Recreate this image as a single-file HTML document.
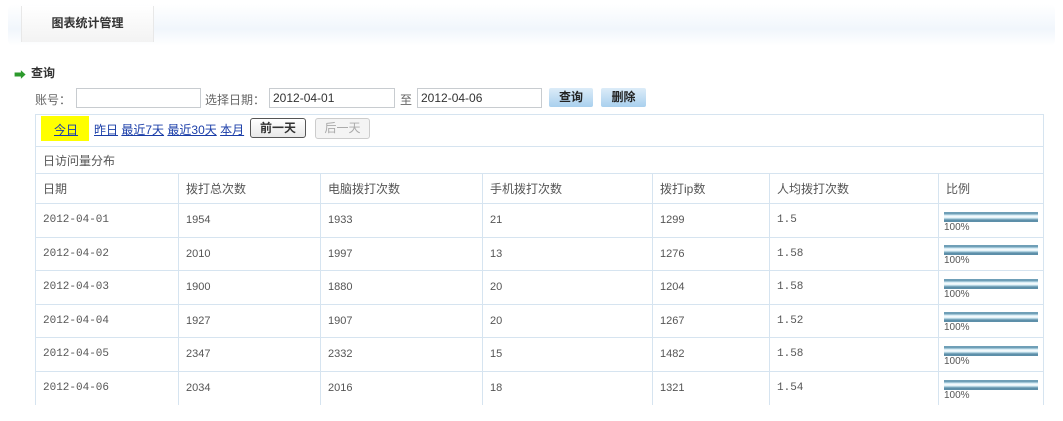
<!DOCTYPE html>
<html><head><meta charset="utf-8"><style>
*{margin:0;padding:0;box-sizing:border-box}
body{width:1063px;height:421px;background:#fff;font-family:"Liberation Sans","Noto Sans CJK SC",sans-serif;font-size:12px;color:#333;position:relative;overflow:hidden}
.top{position:absolute;left:8px;top:4px;width:1047px;height:42px;background:linear-gradient(#fff,#f1f6fc 60%,#fff);border-radius:6px}
.tab{position:absolute;left:21px;top:6px;width:133px;height:36px;background:linear-gradient(#fff,#f3f3f3);border-left:1px solid #e8e8e8;border-right:1px solid #e8e8e8;text-align:center;line-height:34px;font-weight:bold;color:#333;font-size:12px}
.t{position:absolute;white-space:nowrap}
.inp{position:absolute;height:20px;border:1px solid #c8ccd0;background:#fff;font-size:12px;line-height:18px;padding-left:3px}
.btn{position:absolute;height:19px;background:linear-gradient(#dcecf8,#a9d0ee);border-radius:2px;font-weight:bold;text-align:center;line-height:19px;font-size:12px;color:#222}
table{position:absolute;left:35px;top:146px;width:1009px;border-collapse:collapse}
td{border:1px solid #d6e4f0;padding-left:7px;font-size:11px;color:#555;height:33.5px;font-family:"Liberation Sans","Noto Sans CJK SC",sans-serif}
td.d{font-family:"Liberation Mono",monospace}
tr.h td{height:30px;font-size:12px}
.bar{width:94px;height:10px;background:linear-gradient(#6f9fb7 0,#6f9fb7 2px,#cfe8f3 3px,#fff 5px,#cfe8f3 6px,#5d8fa9 8px,#5d8fa9 10px);margin-top:4px;margin-left:-2px}
.pct{font-size:10px;line-height:11px;color:#555;margin-left:-2px}
a{color:#1a3da8;text-decoration:underline}
</style></head><body>
<div class="top"></div>
<div class="tab">图表统计管理</div>
<div class="t" style="left:14px;top:66px;color:#2c9a2c;font-size:12px">➡</div>
<div class="t" style="left:31px;top:64px;font-weight:bold">查询</div>
<div class="t" style="left:35px;top:91px;color:#666">账号：</div>
<div class="inp" style="left:76px;top:88px;width:125px"></div>
<div class="t" style="left:205px;top:91px;color:#666">选择日期：</div>
<div class="inp" style="left:269px;top:88px;width:126px">2012-04-01</div>
<div class="t" style="left:400px;top:91px;color:#666">至</div>
<div class="inp" style="left:417px;top:88px;width:125px">2012-04-06</div>
<div class="btn" style="left:549px;top:88px;width:44px">查询</div>
<div class="btn" style="left:601px;top:88px;width:45px">删除</div>
<div style="position:absolute;left:35px;top:114px;width:1009px;height:33px;border:1px solid #d6e4f0;border-bottom:none"></div>
<div style="position:absolute;left:41px;top:116px;width:48px;height:25px;background:#ffff00"></div>
<div class="t" style="left:54px;top:121px"><a>今日</a></div>
<div class="t" style="left:94px;top:121px"><a>昨日</a> <a>最近7天</a> <a>最近30天</a> <a>本月</a></div>
<div style="position:absolute;left:250px;top:118px;width:56px;height:20px;border:1px solid #555;border-radius:3px;background:linear-gradient(#fff,#e8e8e8);text-align:center;line-height:18px;font-weight:bold">前一天</div>
<div style="position:absolute;left:315px;top:118px;width:55px;height:21px;border:1px solid #ccc;border-radius:3px;background:#f4f4f4;text-align:center;line-height:19px;color:#aaa">后一天</div>
<table>
<tr class="h"><td colspan="7" style="height:27px">日访问量分布</td></tr>
<tr class="h"><td style="width:143px">日期</td><td style="width:142px">拨打总次数</td><td style="width:162px">电脑拨打次数</td><td style="width:170px">手机拨打次数</td><td style="width:117px">拨打ip数</td><td style="width:169px">人均拨打次数</td><td>比例</td></tr>
<tr><td class="d">2012-04-01</td><td>1954</td><td>1933</td><td>21</td><td>1299</td><td class="d">1.5</td><td><div class="bar"></div><div class="pct">100%</div></td></tr>
<tr><td class="d">2012-04-02</td><td>2010</td><td>1997</td><td>13</td><td>1276</td><td class="d">1.58</td><td><div class="bar"></div><div class="pct">100%</div></td></tr>
<tr><td class="d">2012-04-03</td><td>1900</td><td>1880</td><td>20</td><td>1204</td><td class="d">1.58</td><td><div class="bar"></div><div class="pct">100%</div></td></tr>
<tr><td class="d">2012-04-04</td><td>1927</td><td>1907</td><td>20</td><td>1267</td><td class="d">1.52</td><td><div class="bar"></div><div class="pct">100%</div></td></tr>
<tr><td class="d">2012-04-05</td><td>2347</td><td>2332</td><td>15</td><td>1482</td><td class="d">1.58</td><td><div class="bar"></div><div class="pct">100%</div></td></tr>
<tr><td class="d" style="border-bottom:none">2012-04-06</td><td style="border-bottom:none">2034</td><td style="border-bottom:none">2016</td><td style="border-bottom:none">18</td><td style="border-bottom:none">1321</td><td class="d" style="border-bottom:none">1.54</td><td style="border-bottom:none"><div class="bar"></div><div class="pct">100%</div></td></tr>
</table>
</body></html>
